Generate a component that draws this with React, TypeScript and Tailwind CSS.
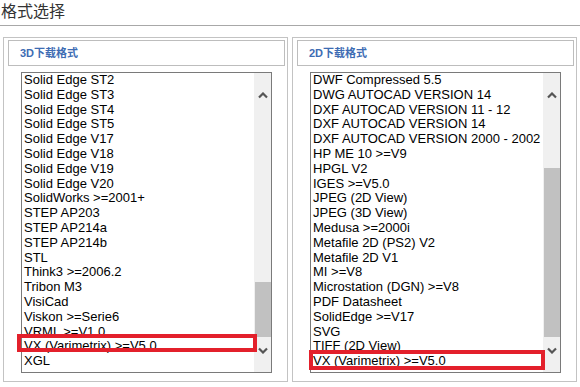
import React from 'react';

const left3d = [
  'Solid Edge ST2',
  'Solid Edge ST3',
  'Solid Edge ST4',
  'Solid Edge ST5',
  'Solid Edge V17',
  'Solid Edge V18',
  'Solid Edge V19',
  'Solid Edge V20',
  'SolidWorks >=2001+',
  'STEP AP203',
  'STEP AP214a',
  'STEP AP214b',
  'STL',
  'Think3 >=2006.2',
  'Tribon M3',
  'VisiCad',
  'Viskon >=Serie6',
  'VRML >=V1.0',
  'VX (Varimetrix) >=V5.0',
  'XGL',
];

const right2d = [
  'DWF Compressed 5.5',
  'DWG AUTOCAD VERSION 14',
  'DXF AUTOCAD VERSION 11 - 12',
  'DXF AUTOCAD VERSION 14',
  'DXF AUTOCAD VERSION 2000 - 2002',
  'HP ME 10 >=V9',
  'HPGL V2',
  'IGES >=V5.0',
  'JPEG (2D View)',
  'JPEG (3D View)',
  'Medusa >=2000i',
  'Metafile 2D (PS2) V2',
  'Metafile 2D V1',
  'MI >=V8',
  'Microstation (DGN) >=V8',
  'PDF Datasheet',
  'SolidEdge >=V17',
  'SVG',
  'TIFF (2D View)',
  'VX (Varimetrix) >=V5.0',
];

function Chevron({ down }: { down?: boolean }) {
  return (
    <svg width="10" height="7" viewBox="0 0 10 7">
      <path
        d={down ? 'M1 1.5 L5 5.5 L9 1.5' : 'M1 5.5 L5 1.5 L9 5.5'}
        fill="none"
        stroke="#555"
        strokeWidth="2.2"
      />
    </svg>
  );
}

function ListBox({ items, side }: { items: string[]; side: 'left' | 'right' }) {
  return (
    <div className="relative mt-[6px] ml-[13px] w-[251px]">
      <div className="flex h-[301px] overflow-hidden border border-[#7a7a7a] bg-white">
        <ul className="flex-1 overflow-hidden pl-[2px] text-[13px] leading-[14.8px] text-black whitespace-nowrap">
          {items.map((it) => (
            <li key={it}>{it}</li>
          ))}
        </ul>
        {/* scrollbar */}
        <div className="flex w-[17px] shrink-0 flex-col bg-[#f0f0f0]">
          <div className="flex h-[44px] items-center justify-center">
            <Chevron />
          </div>
          <div
            className={
              side === 'left'
                ? 'ml-[1px] mt-[165px] h-[55px] bg-[#c1c1c1]'
                : 'ml-[1px] mt-[51px] h-[169px] bg-[#c1c1c1]'
            }
          />
          <div className="flex h-[26px] items-center justify-center">
            <Chevron down />
          </div>
        </div>
      </div>
      {/* highlighted row */}
      {side === 'left' ? (
        <div className="absolute left-[-4px] top-[262px] h-[18px] w-[240px] border-[4px] border-[#e3202b]" />
      ) : (
        <div className="absolute left-[-1px] top-[278px] h-[20px] w-[236px] border-[4px] border-[#e3202b]" />
      )}
    </div>
  );
}

function Panel({ title, children }: { title: string; children: React.ReactNode }) {
  return (
    <div className="h-[345px] border border-[#c3c3c3] pt-[2px] pl-[4px] pr-[2px]">
      <div className="flex h-[26px] items-center border border-[#bdbdbd] pl-[11px] text-[11px] font-bold text-[#3d6cb3]">
        {title}
      </div>
      {children}
    </div>
  );
}

export default function App() {
  return (
    <div
      className="h-[387px] w-[580px] bg-white"
      style={{ fontFamily: '"Liberation Sans", Arial, "Noto Sans CJK SC", sans-serif' }}
    >
      <div className="h-[26px] border-b border-[#a8a8a8] pl-[1px] text-[16px] leading-[24px] text-[#333]">
        格式选择
      </div>
      <div className="mt-[11px] grid grid-cols-[285px_285px] gap-[4px] pl-[3px]">
        <Panel title="3D下载格式">
          <ListBox items={left3d} side="left" />
        </Panel>
        <Panel title="2D下载格式">
          <ListBox items={right2d} side="right" />
        </Panel>
      </div>
    </div>
  );
}
